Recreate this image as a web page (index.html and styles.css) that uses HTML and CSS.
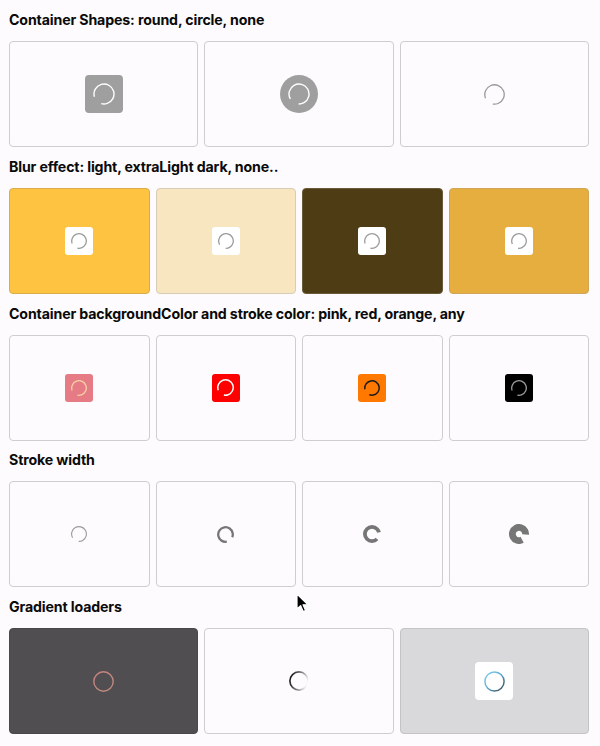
FILE: index.html
```html
<!DOCTYPE html>
<html lang="en">
<head>
<meta charset="utf-8">
<title>Loader demos</title>
<link rel="stylesheet" href="styles.css">
</head>
<body>
<svg class="defs" width="0" height="0" aria-hidden="true">
  <defs>
    <linearGradient id="g-rose" x1="0" y1="0" x2="1" y2="1">
      <stop offset="0" stop-color="#c9817f"/>
      <stop offset="1" stop-color="#b98b7f"/>
    </linearGradient>
    <linearGradient id="g-mono" x1="0" y1="0.3" x2="1" y2="0.6">
      <stop offset="0" stop-color="#111"/>
      <stop offset="0.55" stop-color="#888"/>
      <stop offset="1" stop-color="#fff"/>
    </linearGradient>
    <linearGradient id="g-sky" x1="0" y1="0" x2="1" y2="1">
      <stop offset="0" stop-color="#8fd3f4"/>
      <stop offset="0.5" stop-color="#5aa9cf"/>
      <stop offset="1" stop-color="#3a3f44"/>
    </linearGradient>
  </defs>
</svg>
<main class="page">
  <section class="demo">
    <h2 class="demo-title">Container Shapes: round, circle, none</h2>
    <div class="grid grid-3">
      <div class="tile">
        <div class="chip chip-lg chip-round chip-grey">
          <svg class="ring ring-white" width="22" height="22" viewBox="0 0 22 22"><circle cx="11" cy="11" r="10" stroke-width="1.4" pathLength="100" stroke-dasharray="84 16" transform="rotate(164 11 11)"/></svg>
        </div>
      </div>
      <div class="tile">
        <div class="chip chip-lg chip-circle chip-grey">
          <svg class="ring ring-white" width="22" height="22" viewBox="0 0 22 22"><circle cx="11" cy="11" r="10" stroke-width="1.4" pathLength="100" stroke-dasharray="84 16" transform="rotate(150 11 11)"/></svg>
        </div>
      </div>
      <div class="tile">
        <svg class="ring ring-grey" width="21" height="21" viewBox="0 0 21 21"><circle cx="10.5" cy="10.5" r="9.7" stroke-width="1.3" pathLength="100" stroke-dasharray="84 16" transform="rotate(158 10.5 10.5)"/></svg>
      </div>
    </div>
  </section>

  <section class="demo">
    <h2 class="demo-title">Blur effect: light, extraLight dark, none..</h2>
    <div class="grid grid-4">
      <div class="tile tile-gold">
        <div class="chip chip-sm chip-round chip-white">
          <svg class="ring ring-grey" width="16" height="16" viewBox="0 0 16 16"><circle cx="8" cy="8" r="7.3" stroke-width="1.3" pathLength="100" stroke-dasharray="84 16" transform="rotate(160 8 8)"/></svg>
        </div>
      </div>
      <div class="tile tile-cream">
        <div class="chip chip-sm chip-round chip-white">
          <svg class="ring ring-grey" width="16" height="16" viewBox="0 0 16 16"><circle cx="8" cy="8" r="7.3" stroke-width="1.3" pathLength="100" stroke-dasharray="84 16" transform="rotate(150 8 8)"/></svg>
        </div>
      </div>
      <div class="tile tile-brown">
        <div class="chip chip-sm chip-round chip-white">
          <svg class="ring ring-grey" width="16" height="16" viewBox="0 0 16 16"><circle cx="8" cy="8" r="7.3" stroke-width="1.3" pathLength="100" stroke-dasharray="84 16" transform="rotate(160 8 8)"/></svg>
        </div>
      </div>
      <div class="tile tile-amber">
        <div class="chip chip-sm chip-round chip-white">
          <svg class="ring ring-grey" width="16" height="16" viewBox="0 0 16 16"><circle cx="8" cy="8" r="7.3" stroke-width="1.3" pathLength="100" stroke-dasharray="84 16" transform="rotate(155 8 8)"/></svg>
        </div>
      </div>
    </div>
  </section>

  <section class="demo">
    <h2 class="demo-title">Container backgroundColor and stroke color: pink, red, orange, any</h2>
    <div class="grid grid-4">
      <div class="tile">
        <div class="chip chip-sm chip-round chip-pink">
          <svg class="ring ring-peach" width="16" height="16" viewBox="0 0 16 16"><circle cx="8" cy="8" r="7.3" stroke-width="1.3" pathLength="100" stroke-dasharray="84 16" transform="rotate(160 8 8)"/></svg>
        </div>
      </div>
      <div class="tile">
        <div class="chip chip-sm chip-round chip-red">
          <svg class="ring ring-white" width="17" height="17" viewBox="0 0 17 17"><circle cx="8.5" cy="8.5" r="7.7" stroke-width="1.5" pathLength="100" stroke-dasharray="84 16" transform="rotate(160 8.5 8.5)"/></svg>
        </div>
      </div>
      <div class="tile">
        <div class="chip chip-sm chip-round chip-orange">
          <svg class="ring ring-dark" width="16" height="16" viewBox="0 0 16 16"><circle cx="8" cy="8" r="7.2" stroke-width="1.5" pathLength="100" stroke-dasharray="84 16" transform="rotate(170 8 8)"/></svg>
        </div>
      </div>
      <div class="tile">
        <div class="chip chip-sm chip-round chip-black">
          <svg class="ring ring-grey" width="16" height="16" viewBox="0 0 16 16"><circle cx="8" cy="8" r="7.3" stroke-width="1.3" pathLength="100" stroke-dasharray="84 16" transform="rotate(160 8 8)"/></svg>
        </div>
      </div>
    </div>
  </section>

  <section class="demo">
    <h2 class="demo-title">Stroke width</h2>
    <div class="grid grid-4">
      <div class="tile">
        <svg class="ring ring-light" width="16" height="16" viewBox="0 0 16 16"><circle cx="8" cy="8" r="7.4" stroke-width="1.1" pathLength="100" stroke-dasharray="84 16" transform="rotate(150 8 8)"/></svg>
      </div>
      <div class="tile">
        <svg class="ring ring-mid" width="17" height="17" viewBox="0 0 17 17"><circle cx="8.5" cy="8.5" r="7.3" stroke-width="2.3" pathLength="100" stroke-dasharray="84 16" transform="rotate(80 8.5 8.5)"/></svg>
      </div>
      <div class="tile">
        <svg class="ring ring-mid" width="18" height="18" viewBox="0 0 18 18"><circle cx="9" cy="9" r="7.1" stroke-width="3.8" pathLength="100" stroke-dasharray="84 16" transform="rotate(45 9 9)"/></svg>
      </div>
      <div class="tile">
        <svg class="ring ring-mid" width="20" height="20" viewBox="0 0 20 20"><circle cx="10" cy="10" r="6.6" stroke-width="6.8" pathLength="100" stroke-dasharray="84 16" transform="rotate(62 10 10)"/></svg>
      </div>
    </div>
  </section>

  <section class="demo">
    <h2 class="demo-title">Gradient loaders</h2>
    <div class="grid grid-3">
      <div class="tile tile-slate">
        <svg class="ring ring-rose" width="21" height="21" viewBox="0 0 21 21"><circle cx="10.5" cy="10.5" r="9.7" stroke-width="1.4"/></svg>
      </div>
      <div class="tile">
        <svg class="ring ring-mono" width="20" height="20" viewBox="0 0 20 20"><circle cx="10" cy="10" r="9.1" stroke-width="1.6"/></svg>
      </div>
      <div class="tile tile-mist">
        <div class="chip chip-lg chip-round chip-white">
          <svg class="ring ring-sky" width="21" height="21" viewBox="0 0 21 21"><circle cx="10.5" cy="10.5" r="9.6" stroke-width="1.5"/></svg>
        </div>
      </div>
    </div>
  </section>

  <svg class="cursor" width="13" height="20" viewBox="0 0 13 20" aria-hidden="true"><path d="M1 1 L1 16 L4.6 12.6 L7.2 18.6 L9.6 17.6 L7 11.8 L12 11.8 Z" fill="#000" stroke="#fff" stroke-width="1.2" stroke-linejoin="round"/></svg>
</main>
</body>
</html>
```

FILE: styles.css
```css
* {
  box-sizing: border-box;
  margin: 0;
  padding: 0;
}

html, body {
  background: #fdfbfd;
}

body {
  font-family: Inter, "Noto Sans", "Liberation Sans", sans-serif;
  color: #0a0a0a;
}

.defs {
  position: absolute;
  width: 0;
  height: 0;
}

.page {
  position: relative;
  padding: 10px 11px 0 9px;
}

.demo {
  display: flex;
  flex-direction: column;
  gap: 11px;
  margin-bottom: 9.75px;
}

.demo-title {
  font-size: 14.2px;
  font-weight: 700;
  line-height: 20px;
  letter-spacing: -0.15px;
}

.grid {
  display: grid;
  gap: 6px;
}

.grid-3 {
  grid-template-columns: repeat(3, 1fr);
}

.grid-4 {
  grid-template-columns: repeat(4, 1fr);
}

.tile {
  height: 106px;
  border: 1px solid #cfcdcf;
  border-radius: 4px;
  display: flex;
  align-items: center;
  justify-content: center;
  background: #fdfbfd;
}

.tile-gold { background: #fec441; border-color: #d9ab4a; }
.tile-cream { background: #f7e6bf; border-color: #d7cdb6; }
.tile-brown { background: #4e3d14; border-color: #6a5a39; }
.tile-amber { background: #e6ae3e; border-color: #cfa658; }
.tile-slate { background: #504e50; border-color: #4a484a; }
.tile-mist { background: #d9d8da; border-color: #c4c3c5; }

.chip {
  display: flex;
  align-items: center;
  justify-content: center;
}

.chip-lg {
  width: 38px;
  height: 38px;
}

.chip-sm {
  width: 28px;
  height: 28px;
}

.chip-round { border-radius: 4px; }
.chip-sm.chip-round { border-radius: 3px; }
.chip-circle { border-radius: 50%; }

.chip-grey { background: #a09fa0; }
.chip-white { background: #ffffff; }
.chip-pink { background: #e67b86; }
.chip-red { background: #fe0000; }
.chip-orange { background: #ff7800; }
.chip-black { background: #000000; }

.ring {
  display: block;
  fill: none;
}

.ring-white circle { stroke: #ffffff; }
.ring-grey circle { stroke: #9b9b9b; }
.ring-peach circle { stroke: #f7d3a4; }
.ring-dark circle { stroke: #1a1a1a; }
.ring-light circle { stroke: #9a9a9a; }
.ring-mid circle { stroke: #767676; }
.ring-rose circle { stroke: url(#g-rose); }
.ring-mono circle { stroke: url(#g-mono); }
.ring-sky circle { stroke: url(#g-sky); }

.cursor {
  position: absolute;
  left: 296px;
  top: 593px;
}
```
